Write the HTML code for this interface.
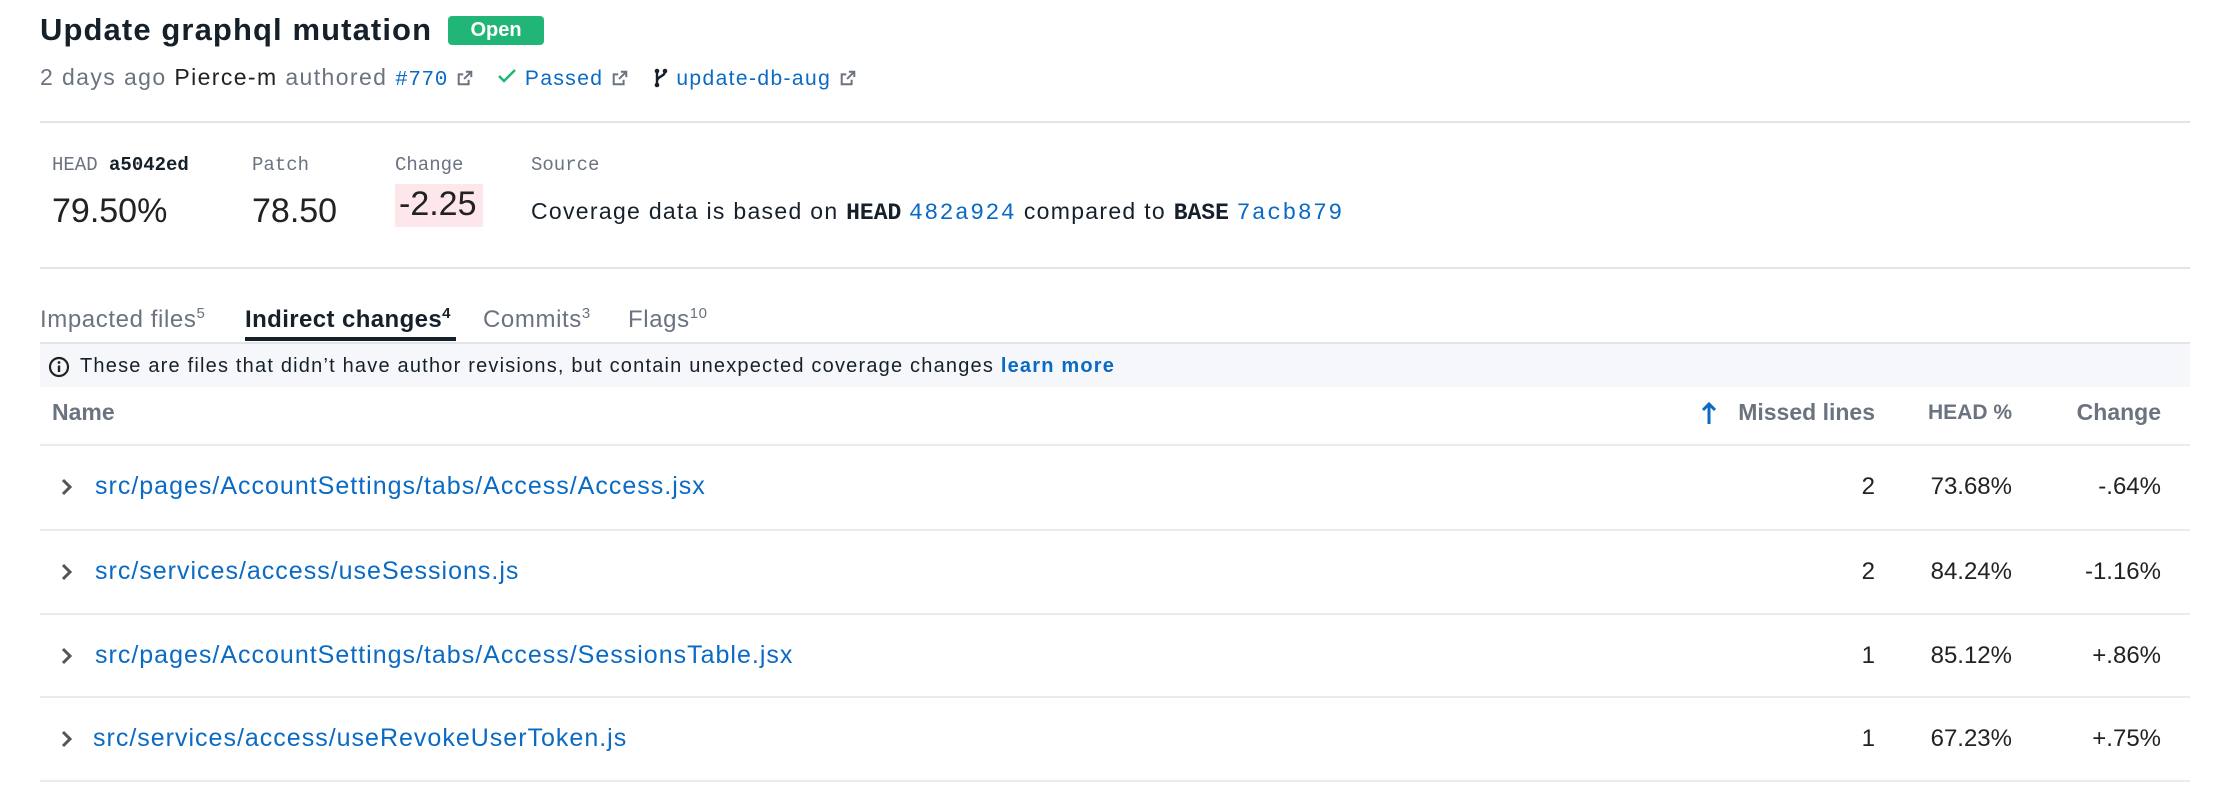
<!DOCTYPE html>
<html><head><meta charset="utf-8"><style>
*{margin:0;padding:0;box-sizing:border-box}
body{width:2222px;height:812px;background:#fff;font-family:"Liberation Sans",sans-serif;color:#222;position:relative;overflow:hidden}
.a{position:absolute;white-space:nowrap}
.mono{font-family:"Liberation Mono",monospace;letter-spacing:0}
.blue{color:#0a6ac4}
.gray{color:#6b7280}
.hr{position:absolute;left:40px;width:2150px;height:2px;background:#e2e4e8}
.rl{position:absolute;left:40px;width:2150px;height:2px;background:#eaebee}
.num{position:absolute;font-size:24px;color:#222;text-align:right}
sup{font-size:15px}
</style></head><body>
<div class="a" style="left:40px;top:12px;font-size:31px;font-weight:bold;color:#15202b;letter-spacing:1.1px">Update graphql mutation</div>
<div class="a" style="left:448px;top:16px;width:96px;height:29px;background:#21b577;border-radius:4px;color:#fff;font-weight:bold;font-size:20px;text-align:center;line-height:29px">Open</div>
<div class="a" style="left:40px;top:64px;font-size:23px;color:#6b7280;letter-spacing:1.4px">2 days ago <span style="color:#222">Pierce-m</span> authored <span class="mono blue" style="font-size:21px;letter-spacing:0.6px">#770</span>
<svg width="18" height="18" viewBox="0 0 20 20" style="vertical-align:-2px"><path d="M11 3h6v6M17 3l-8 8M14 12v5H3V6h5" fill="none" stroke="#6b7280" stroke-width="2.2"/></svg>
&nbsp;&nbsp;<svg width="20" height="18" viewBox="0 0 20 18"><path d="M2 9l5 5L18 3" fill="none" stroke="#21b577" stroke-width="2.5"/></svg>
<span class="blue" style="font-size:21px;letter-spacing:1.4px">Passed</span>
<svg width="18" height="18" viewBox="0 0 20 20" style="vertical-align:-2px"><path d="M11 3h6v6M17 3l-8 8M14 12v5H3V6h5" fill="none" stroke="#6b7280" stroke-width="2.2"/></svg>
&nbsp;&nbsp;<svg width="16" height="20" viewBox="0 0 16 20" style="vertical-align:-3px"><circle cx="4" cy="3" r="2.3" fill="#15202b"/><circle cx="12" cy="3" r="2.3" fill="#15202b"/><circle cx="4" cy="17" r="2.3" fill="#15202b"/><path d="M4 3v14M12 3c0 6-8 5-8 10" fill="none" stroke="#15202b" stroke-width="2.4"/></svg>
<span class="blue" style="font-size:21px;letter-spacing:1.4px">update-db-aug</span>
<svg width="18" height="18" viewBox="0 0 20 20" style="vertical-align:-2px"><path d="M11 3h6v6M17 3l-8 8M14 12v5H3V6h5" fill="none" stroke="#6b7280" stroke-width="2.2"/></svg></div>
<div class="hr" style="top:121px"></div>

<div class="a mono gray" style="left:52px;top:154px;font-size:19px">HEAD <b style="color:#15202b">a5042ed</b></div>
<div class="a mono gray" style="left:252px;top:154px;font-size:19px">Patch</div>
<div class="a mono gray" style="left:395px;top:154px;font-size:19px">Change</div>
<div class="a mono gray" style="left:531px;top:154px;font-size:19px">Source</div>
<div class="a" style="left:52px;top:192px;font-size:34px;color:#222">79.50%</div>
<div class="a" style="left:252px;top:192px;font-size:34px;color:#222">78.50</div>
<div class="a" style="left:395px;top:184px;width:88px;height:43px;background:#fde7ea;font-size:34px;color:#222;line-height:40px;padding-left:4px">-2.25</div>
<div class="a" style="left:531px;top:198px;font-size:23px;color:#15202b;letter-spacing:1.3px">Coverage data is based on <b class="mono">HEAD</b> <span class="mono blue" style="letter-spacing:1.5px">482a924</span> compared to <b class="mono">BASE</b> <span class="mono blue" style="letter-spacing:1.5px">7acb879</span></div>
<div class="hr" style="top:267px"></div>

<div class="a gray" style="left:40px;top:305px;font-size:24px;letter-spacing:0.6px">Impacted files<sup>5</sup></div>
<div class="a" style="left:245px;top:305px;font-size:24px;font-weight:bold;color:#15202b;letter-spacing:0.4px">Indirect changes<sup>4</sup></div>
<div class="a gray" style="left:483px;top:305px;font-size:24px;letter-spacing:0.6px">Commits<sup>3</sup></div>
<div class="a gray" style="left:628px;top:305px;font-size:24px;letter-spacing:0.6px">Flags<sup>10</sup></div>
<div class="hr" style="top:342px"></div>
<div class="a" style="left:245px;top:337px;width:211px;height:4px;background:#15202b"></div>
<div class="a" style="left:40px;top:344px;width:2150px;height:43px;background:#f6f7fa"></div>
<svg class="a" style="left:48px;top:356px" width="22" height="22" viewBox="0 0 22 22"><circle cx="11" cy="11" r="9" fill="none" stroke="#222" stroke-width="2.2"/><circle cx="11" cy="6.5" r="1.4" fill="#222"/><path d="M11 9.5v6.5" stroke="#222" stroke-width="2.4"/></svg>
<div class="a" style="left:80px;top:355px;font-size:20px;color:#15202b;letter-spacing:1.2px">These are files that didn’t have author revisions, but contain unexpected coverage changes <b class="blue">learn more</b></div>

<div class="a" style="left:52px;top:399px;font-size:23px;font-weight:bold;color:#6b7280">Name</div>
<svg class="a" style="left:1700px;top:400px" width="18" height="26" viewBox="0 0 18 26"><path d="M9 24V4M3 10l6-6 6 6" fill="none" stroke="#0a6ac4" stroke-width="3"/></svg>
<div class="a" style="right:347px;top:399px;font-size:23px;font-weight:bold;color:#6b7280">Missed lines</div>
<div class="a" style="right:210px;top:401px;font-size:21px;font-weight:bold;color:#6b7280">HEAD %</div>
<div class="a" style="right:61px;top:399px;font-size:23px;font-weight:bold;color:#6b7280">Change</div>
<div class="rl" style="top:444px"></div>

<div class="rl" style="top:529px"></div>
<div class="rl" style="top:613px"></div>
<div class="rl" style="top:696px"></div>
<div class="rl" style="top:780px"></div>

<svg class="a" style="left:59px;top:477px" width="16" height="20" viewBox="0 0 16 20"><path d="M4 3l7 7-7 7" fill="none" stroke="#555" stroke-width="3"/></svg>
<svg class="a" style="left:59px;top:562px" width="16" height="20" viewBox="0 0 16 20"><path d="M4 3l7 7-7 7" fill="none" stroke="#555" stroke-width="3"/></svg>
<svg class="a" style="left:59px;top:646px" width="16" height="20" viewBox="0 0 16 20"><path d="M4 3l7 7-7 7" fill="none" stroke="#555" stroke-width="3"/></svg>
<svg class="a" style="left:59px;top:729px" width="16" height="20" viewBox="0 0 16 20"><path d="M4 3l7 7-7 7" fill="none" stroke="#555" stroke-width="3"/></svg>

<div class="a blue" style="left:95px;top:472px;font-size:25px;letter-spacing:1px">src/pages/AccountSettings/tabs/Access/Access.jsx</div>
<div class="a blue" style="left:95px;top:557px;font-size:25px;letter-spacing:1px">src/services/access/useSessions.js</div>
<div class="a blue" style="left:95px;top:641px;font-size:25px;letter-spacing:1px">src/pages/AccountSettings/tabs/Access/SessionsTable.jsx</div>
<div class="a blue" style="left:93px;top:724px;font-size:25px;letter-spacing:1px">src/services/access/useRevokeUserToken.js</div>

<div class="num" style="right:347px;top:473px">2</div><div class="num" style="right:210px;top:473px">73.68%</div><div class="num" style="right:61px;top:473px">-.64%</div>
<div class="num" style="right:347px;top:558px">2</div><div class="num" style="right:210px;top:558px">84.24%</div><div class="num" style="right:61px;top:558px">-1.16%</div>
<div class="num" style="right:347px;top:642px">1</div><div class="num" style="right:210px;top:642px">85.12%</div><div class="num" style="right:61px;top:642px">+.86%</div>
<div class="num" style="right:347px;top:725px">1</div><div class="num" style="right:210px;top:725px">67.23%</div><div class="num" style="right:61px;top:725px">+.75%</div>
</body></html>
